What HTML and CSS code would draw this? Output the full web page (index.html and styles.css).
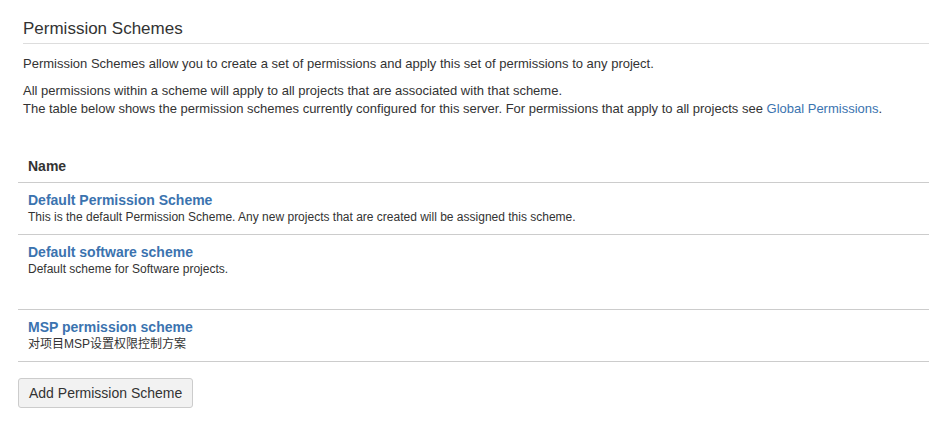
FILE: index.html
```html
<!DOCTYPE html>
<html>
<head>
<meta charset="utf-8">
<link rel="stylesheet" href="styles.css">
</head>
<body>
<div class="page">
  <header class="head">
    <h2 class="title">Permission Schemes</h2>
  </header>
  <div class="intro">
    <p class="p1">Permission Schemes allow you to create a set of permissions and apply this set of permissions to any project.</p>
    <p class="p2">All permissions within a scheme will apply to all projects that are associated with that scheme.<br>The table below shows the permission schemes currently configured for this server. For permissions that apply to all projects see <a href="#" class="link">Global Permissions</a>.</p>
  </div>
  <table class="schemes">
    <thead>
      <tr><th>Name</th></tr>
    </thead>
    <tbody>
      <tr><td><a href="#" class="name">Default Permission Scheme</a><div class="desc">This is the default Permission Scheme. Any new projects that are created will be assigned this scheme.</div></td></tr>
      <tr class="tall"><td><a href="#" class="name">Default software scheme</a><div class="desc">Default scheme for Software projects.</div></td></tr>
      <tr><td><a href="#" class="name">MSP permission scheme</a><div class="desc">对项目MSP设置权限控制方案</div></td></tr>
    </tbody>
  </table>
  <div class="actions">
    <button class="btn">Add Permission Scheme</button>
  </div>
</div>
</body>
</html>
```

FILE: styles.css
```css
html, body {
  margin: 0;
  padding: 0;
  background: #fff;
}
body {
  font-family: "Liberation Sans", Arial, "Noto Sans CJK SC", sans-serif;
  color: #333;
  font-size: 13px;
}
.page {
  padding: 0 0 0 18px;
}
.head {
  margin-left: 5px;
  border-bottom: 1px solid #ddd;
  padding-top: 19px;
  padding-bottom: 4px;
}
.title {
  margin: 0;
  font-size: 17px;
  font-weight: normal;
  line-height: 20px;
  color: #333;
}
.intro {
  padding-left: 5px;
}
.p1 {
  margin: 11px 0 0 0;
  line-height: 17px;
}
.p2 {
  margin: 10px 0 0 0;
  line-height: 18px;
}
.link {
  color: #3b73af;
  text-decoration: none;
}
.schemes {
  width: 100%;
  border-collapse: collapse;
  margin-top: 37px;
}
.schemes th {
  text-align: left;
  font-weight: bold;
  color: #333;
  font-size: 14px;
  padding: 3px 10px 7px;
  line-height: 17px;
  border-bottom: 1px solid #ccc;
}
.schemes td {
  padding: 9px 10px 9px;
  border-bottom: 1px solid #ccc;
  vertical-align: top;
}
.schemes tr.tall td {
  height: 56px;
}
.name {
  display: block;
  font-weight: bold;
  color: #3b73af;
  text-decoration: none;
  font-size: 14px;
  line-height: 17px;
}
.desc {
  font-size: 12px;
  line-height: 16px;
  color: #333;
}
.actions {
  margin-top: 16px;
}
.btn {
  font-family: "Liberation Sans", Arial, sans-serif;
  font-size: 14px;
  color: #333;
  background: #f2f2f2;
  border: 1px solid #ccc;
  border-radius: 3px;
  height: 30px;
  padding: 0 10px;
  line-height: 20px;
}
```
